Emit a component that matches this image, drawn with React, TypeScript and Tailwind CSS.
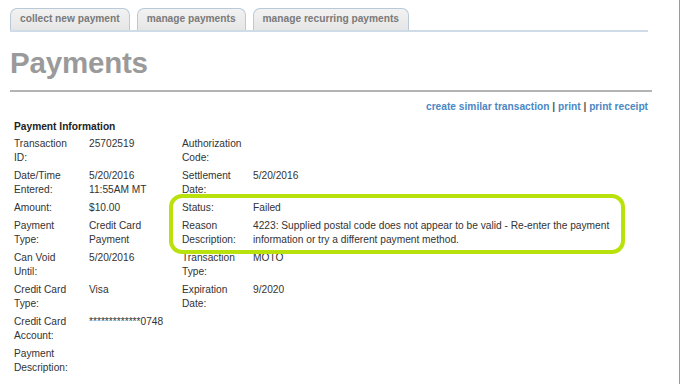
const tabs = ["collect new payment", "manage payments", "manage recurring payments"];

const rows: [string, string, string, string][] = [
  ["Transaction ID:", "25702519", "Authorization Code:", ""],
  ["Date/Time Entered:", "5/20/2016 11:55AM MT", "Settlement Date:", "5/20/2016"],
  ["Amount:", "$10.00", "Status:", "Failed"],
  [
    "Payment Type:",
    "Credit Card Payment",
    "Reason Description:",
    "4223: Supplied postal code does not appear to be valid - Re-enter the payment information or try a different payment method.",
  ],
  ["Can Void Until:", "5/20/2016", "Transaction Type:", "MOTO"],
  ["Credit Card Type:", "Visa", "Expiration Date:", "9/2020"],
  ["Credit Card Account:", "*************0748", "", ""],
  ["Payment Description:", "", "", ""],
];

export default function App() {
  return (
    <div className="relative w-[680px] h-[384px] overflow-hidden bg-white border-r border-[#9a9a9a] font-['Liberation_Sans',Arial,sans-serif]">
      <div className="pl-[10px] pr-[28px] pt-[8px]">
        {/* tabs */}
        <div className="flex gap-[7px] w-[638px] border-b-2 border-[#cfdce8]">
          {tabs.map((t) => (
            <div
              key={t}
              className="h-[22px] px-[9px] rounded-t-[7px] border border-b-0 border-[#b9c9d8] bg-gradient-to-b from-[#f2f2f2] to-[#e6e6e6] text-[10.2px] font-bold leading-[19px] text-[#7a7a7a]"
            >
              {t}
            </div>
          ))}
        </div>

        <h1 className="mt-[14px] text-[29.5px] font-bold leading-[34px] text-[#9a9a9a] tracking-[-0.2px]">Payments</h1>
        <div className="mt-[10px] h-[2px] w-[642px] bg-[#b4b4b4]" />

        <div className="mt-[8px] w-[638px] text-right text-[10.2px] font-bold leading-[14px] text-[#4a87c4]">
          create similar transaction <span className="text-[#555]">|</span> print{" "}
          <span className="text-[#555]">|</span> print receipt
        </div>

        <div className="pl-[4px]">
          <div className="mt-[6px] text-[10.2px] font-bold leading-[14px] text-[#222]">Payment Information</div>
          <div className="mt-[1px] grid w-[610px] grid-cols-[75px_93px_71px_1fr] text-[10.2px] leading-[14px] text-[#333]">
            {rows.map((r, i) => (
              <div key={i} className="contents">
                <div className="py-[2px] pr-[12px]">{r[0]}</div>
                <div className="py-[2px] pr-[12px]">{r[1]}</div>
                <div className="py-[2px] pr-[8px]">{r[2]}</div>
                <div className="py-[2px] pr-[4px]">{r[3]}</div>
              </div>
            ))}
          </div>
        </div>
      </div>

      {/* highlight annotation */}
      <div className="absolute left-[169px] top-[194px] w-[456px] h-[60px] rounded-[13px] border-4 border-[#b9e20d]" />
    </div>
  );
}
